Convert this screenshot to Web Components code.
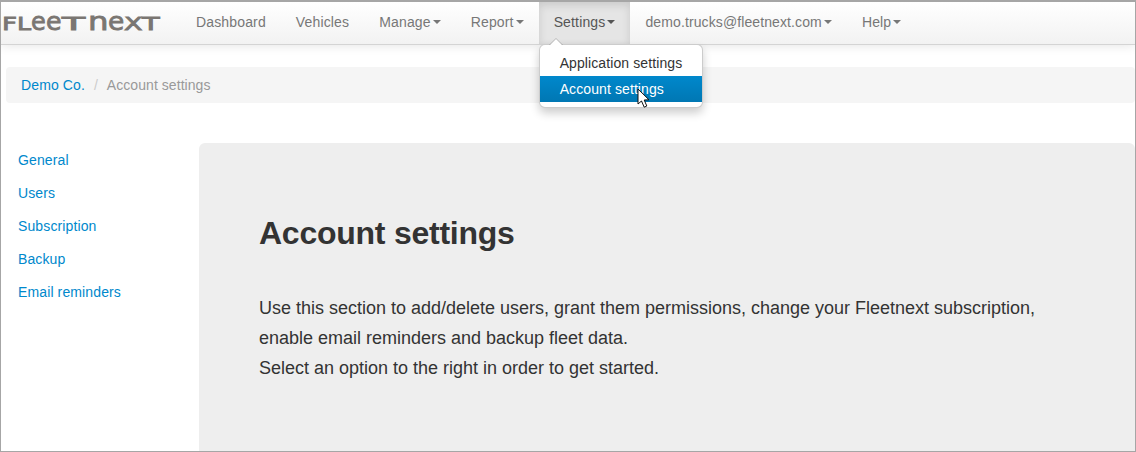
<!DOCTYPE html>
<html>
<head>
<meta charset="utf-8">
<style>
  html, body { margin: 0; height: 100%; background: #fff; overflow: hidden; }
  body { font: 14px/20px "Liberation Sans", Arial, sans-serif; color: #333; }
</style>
</head>
<body>
<app-frame>
  <top-bar>
    <nav-item>Dashboard</nav-item>
    <nav-item>Vehicles</nav-item>
    <nav-item caret>Manage</nav-item>
    <nav-item caret>Report</nav-item>
    <nav-item caret active>Settings<drop-menu slot="menu">
        <menu-row>Application settings</menu-row>
        <menu-row selected>Account settings</menu-row>
      </drop-menu></nav-item>
    <nav-item caret style="letter-spacing: .11px">demo.trucks@fleetnext.com</nav-item>
    <nav-item caret>Help</nav-item>
  </top-bar>
  <bread-crumb><a slot="root">Demo Co.</a>Account settings</bread-crumb>
  <page-body>
    <side-nav>
      <a>General</a>
      <a>Users</a>
      <a>Subscription</a>
      <a>Backup</a>
      <a>Email reminders</a>
    </side-nav>
    <hero-unit heading="Account settings">
      Use this section to add/delete users, grant them permissions, change your Fleetnext subscription,<br>
      enable email reminders and backup fleet data.<br>
      Select an option to the right in order to get started.
    </hero-unit>
  </page-body>
</app-frame>

<script>
/*
 * Small helper, every element just stamps its markup in an open shadow root
 */
class ShadowEl extends HTMLElement {
  constructor() {
    super();
    this.attachShadow({ mode: "open" });
    this.shadowRoot.innerHTML = this.markup;
  }
}

class AppFrame extends ShadowEl {
  get markup() {
    return `
    <style>
      :host {
        display: flex;
        flex-direction: column;
        box-sizing: border-box;
        height: 452px;
        border: 1px solid #a6a6a6;
        border-top-width: 2px;
        overflow: hidden;
        letter-spacing: .12px;
      }
    </style>
    <slot></slot>
    `;
  }
}

class BrandMark extends ShadowEl {
  get markup() {
    // wordmark is unicase: the lowercase letters are set larger to reach cap height
    const letters = [
      ["F", 18, 15, 1.45], ["L", 18, 14, 1.4],
      ["e", 24, 15, 1.0], ["e", 24, 16, 1.05],
      ["T", 18, 26, 2.1], ["n", 24, 20, 1.35],
      ["e", 24, 16, 1.1], ["X", 18, 18, 1.5], ["T", 18, 18, 1.6]
    ];
    const spans = letters.map(([c, size, w, sx]) =>
      `<span style="font-size:${size}px;width:${w}px;--sx:${sx}">${c}</span>`).join("");
    return `
    <style>
      :host {
        display: flex;
        align-items: baseline;
        flex: none;
        box-sizing: border-box;
        width: 180px;
        height: 42px;
        padding: 8px 0 0 1px;
        line-height: 24px;
        color: #7a7672;
        font-family: "DejaVu Sans", sans-serif;
        letter-spacing: 0;
        -webkit-text-stroke: .8px #7a7672;
        overflow: hidden;
      }
      span {
        display: block;
        flex: none;
        transform-origin: 0 100%;
        transform: scaleX(var(--sx));
      }
    </style>
    ${spans}
    `;
  }
}

class TopBar extends ShadowEl {
  get markup() {
    return `
    <style>
      :host {
        display: flex;
        flex: none;
        box-sizing: border-box;
        height: 43px;
        background: linear-gradient(to bottom, #ffffff, #f2f2f2);
        border-bottom: 1px solid #d4d4d4;
        box-shadow: 0 1px 10px rgba(0, 0, 0, .1);
        position: relative;
        z-index: 2;
      }
    </style>
    <brand-mark></brand-mark>
    <slot></slot>
    `;
  }
}

class NavItem extends ShadowEl {
  get markup() {
    return `
    <style>
      :host {
        display: block;
        position: relative;
        flex: none;
        color: #777;
        letter-spacing: .15px;
      }
      :host([active]) { color: #555; }
      .link {
        display: block;
        height: 42px;
        box-sizing: border-box;
        padding: 10px 15px 0;
        white-space: nowrap;
      }
      :host([active]) .link {
        background: #e5e5e5;
        box-shadow: inset 0 3px 8px rgba(0, 0, 0, .125);
      }
      .caret {
        display: none;
        width: 0;
        height: 0;
        margin-left: 2px;
        vertical-align: top;
        margin-top: 8px;
        border-top: 4px solid #777;
        border-left: 4px solid transparent;
        border-right: 4px solid transparent;
      }
      :host([caret]) .caret { display: inline-block; }
      :host([active]) .caret { border-top-color: #555; }
    </style>
    <div class="link"><slot></slot><span class="caret"></span></div>
    <slot name="menu"></slot>
    `;
  }
}

class DropMenu extends ShadowEl {
  get markup() {
    return `
    <style>
      :host {
        display: block;
        position: absolute;
        left: 0;
        top: 42px;
        width: 162px;
        padding: 5px 0;
        background: #fff;
        border: 1px solid rgba(0, 0, 0, .2);
        border-radius: 6px;
        box-shadow: 0 5px 10px rgba(0, 0, 0, .2);
        z-index: 5;
      }
      :host::before {
        content: "";
        position: absolute;
        left: 9px;
        top: -7px;
        border-left: 7px solid transparent;
        border-right: 7px solid transparent;
        border-bottom: 7px solid rgba(0, 0, 0, .2);
      }
      :host::after {
        content: "";
        position: absolute;
        left: 10px;
        top: -6px;
        border-left: 6px solid transparent;
        border-right: 6px solid transparent;
        border-bottom: 6px solid #fff;
      }
    </style>
    <slot></slot>
    `;
  }
}

class MenuRow extends ShadowEl {
  get markup() {
    return `
    <style>
      :host {
        display: block;
        position: relative;
        height: 26px;
        padding: 3px 20px;
        box-sizing: border-box;
        color: #333;
        white-space: nowrap;
        letter-spacing: .1px;
      }
      :host([selected]) {
        color: #fff;
        background: linear-gradient(to bottom, #0088cc, #0077b3);
      }
      svg {
        display: none;
        position: absolute;
        left: 97px;
        top: 12px;
      }
      :host([selected]) svg { display: block; }
    </style>
    <slot></slot>
    <svg width="14" height="21" viewBox="0 0 14 21">
      <path d="M1 1 L1 16 L4.5 13 L7.2 19.2 L9.8 18 L7.2 12 L12 11.8 Z" fill="#fff" stroke="#111" stroke-width="1" stroke-linejoin="round"/>
    </svg>
    `;
  }
}

class BreadCrumb extends ShadowEl {
  get markup() {
    return `
    <style>
      :host {
        display: block;
        flex: none;
        box-sizing: border-box;
        height: 36px;
        margin: 22px 0 0 5px;
        padding: 8px 15px;
        background: #f5f5f5;
        border-radius: 4px;
        color: #999;
        letter-spacing: .06px;
      }
      ::slotted(a) { color: #0088cc; letter-spacing: .12px; }
      .sep { color: #ccc; padding: 0 5px; }
    </style>
    <slot name="root"></slot><span class="sep"> / </span><slot></slot>
    `;
  }
}

class PageBody extends ShadowEl {
  get markup() {
    return `
    <style>
      :host {
        display: grid;
        grid-template-columns: 198px 1fr;
        flex: 1;
        margin-top: 40px;
        min-height: 0;
      }
    </style>
    <slot></slot>
    `;
  }
}

class SideNav extends ShadowEl {
  get markup() {
    return `
    <style>
      :host {
        display: flex;
        flex-direction: column;
        gap: 13px;
        padding: 7px 0 0 17px;
      }
      ::slotted(a) {
        color: #0088cc;
        display: block;
      }
    </style>
    <slot></slot>
    `;
  }
}

class HeroUnit extends ShadowEl {
  get markup() {
    return `
    <style>
      :host {
        display: block;
        background: #eeeeee;
        border-radius: 6px;
        padding: 60px 60px 90px;
        font-size: 18px;
        line-height: 30px;
        color: #333;
        letter-spacing: -.005px;
      }
      h1 {
        margin: 0 0 30px;
        font-size: 32px;
        line-height: 60px;
        color: inherit;
        font-weight: bold;
        letter-spacing: -.25px;
      }
      p { margin: 0; }
    </style>
    <h1></h1>
    <p><slot></slot></p>
    `;
  }
  connectedCallback() {
    this.shadowRoot.querySelector("h1").textContent = this.getAttribute("heading");
  }
}

customElements.define("app-frame", AppFrame);
customElements.define("brand-mark", BrandMark);
customElements.define("top-bar", TopBar);
customElements.define("nav-item", NavItem);
customElements.define("drop-menu", DropMenu);
customElements.define("menu-row", MenuRow);
customElements.define("bread-crumb", BreadCrumb);
customElements.define("page-body", PageBody);
customElements.define("side-nav", SideNav);
customElements.define("hero-unit", HeroUnit);
</script>
</body>
</html>
